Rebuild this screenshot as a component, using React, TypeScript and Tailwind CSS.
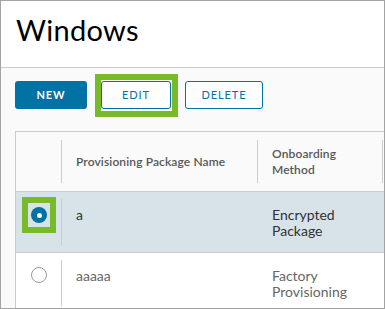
import React from "react"

const font = { fontFamily: "Lato, 'Open Sans', sans-serif" }

function Radio({ checked }: { checked?: boolean }) {
  if (checked) {
    return (
      <span className="flex h-4 w-4 items-center justify-center rounded-full bg-[#0072a3]">
        <span className="h-[5px] w-[5px] rounded-full bg-white" />
      </span>
    )
  }
  return <span className="block h-4 w-4 rounded-full border border-[#9a9a9a] bg-white" />
}

export default function App() {
  return (
    <div
      className="flex h-[309px] w-[385px] flex-col overflow-hidden border border-[#a3a3a3] bg-[#fafafa]"
      style={font}
    >
      <header className="h-[67px] shrink-0 border-b border-[#cccccc] bg-white pl-[15px] pt-[9px]">
        <h1 className="text-[29px] leading-[40px] tracking-[0.01em] text-black">Windows</h1>
      </header>

      <div className="flex gap-[14px] pl-[14px] pt-[13px]">
        <button className="h-7 w-[72px] rounded-[3px] bg-[#0072a3] text-[11px] font-bold tracking-[0.08em] text-white">
          NEW
        </button>
        <div className="relative">
          <span className="pointer-events-none absolute -bottom-[8px] -left-[6px] -right-[7px] -top-[7px] border-[6px] border-[#78bb2a]" />
          <button className="h-7 w-[70px] rounded-[3px] border border-[#0072a3] bg-white text-[11px] tracking-[0.08em] text-[#0072a3]">
            EDIT
          </button>
        </div>
        <button className="h-7 w-[78px] rounded-[3px] border border-[#0072a3] bg-white text-[11px] tracking-[0.08em] text-[#0072a3]">
          DELETE
        </button>
      </div>

      <div className="ml-[14px] mt-[22px] w-[420px] border border-[#cccccc] bg-white">
        <div className="grid h-[60px] grid-cols-[46px_196px_125px_1fr] border-b border-[#cccccc] bg-[#fafafa] text-[12px] font-semibold tracking-[0.01em] text-[#565656]">
          <div className="my-[8px] border-r border-[#cccccc]" />
          <div className="my-[8px] flex items-center border-r border-[#cccccc] pl-[14px]">Provisioning Package Name</div>
          <div className="my-[8px] flex items-center border-r border-[#cccccc] pl-[14px] leading-[16px]">
            Onboarding
            <br />
            Method
          </div>
          <div />
        </div>

        <div className="grid h-[61px] grid-cols-[46px_196px_125px_1fr] border-b border-[#cccccc] bg-[#d8e3e9] text-[14px] leading-[16px] text-[#313131]">
          <div className="relative flex items-start justify-center pt-[15px]">
            <span className="pointer-events-none absolute left-[6px] top-[5px] h-[36px] w-[34px] border-[6px] border-[#78bb2a]" />
            <span className="relative">
              <Radio checked />
            </span>
            <span className="absolute bottom-[7px] right-0 top-[7px] border-r border-[#cccccc]" />
          </div>
          <div className="pl-[14px] pt-[15px]">a</div>
          <div className="pl-[14px] pt-[15px]">
            Encrypted
            <br />
            Package
          </div>
          <div />
        </div>

        <div className="grid h-[61px] grid-cols-[46px_196px_125px_1fr] text-[14px] leading-[16px] text-[#666666]">
          <div className="relative flex items-start justify-center pt-[14px]">
            <Radio />
            <span className="absolute bottom-[7px] right-0 top-[7px] border-r border-[#cccccc]" />
          </div>
          <div className="pl-[14px] pt-[15px]">aaaaa</div>
          <div className="pl-[14px] pt-[15px]">
            Factory
            <br />
            Provisioning
          </div>
          <div />
        </div>
      </div>
    </div>
  )
}
